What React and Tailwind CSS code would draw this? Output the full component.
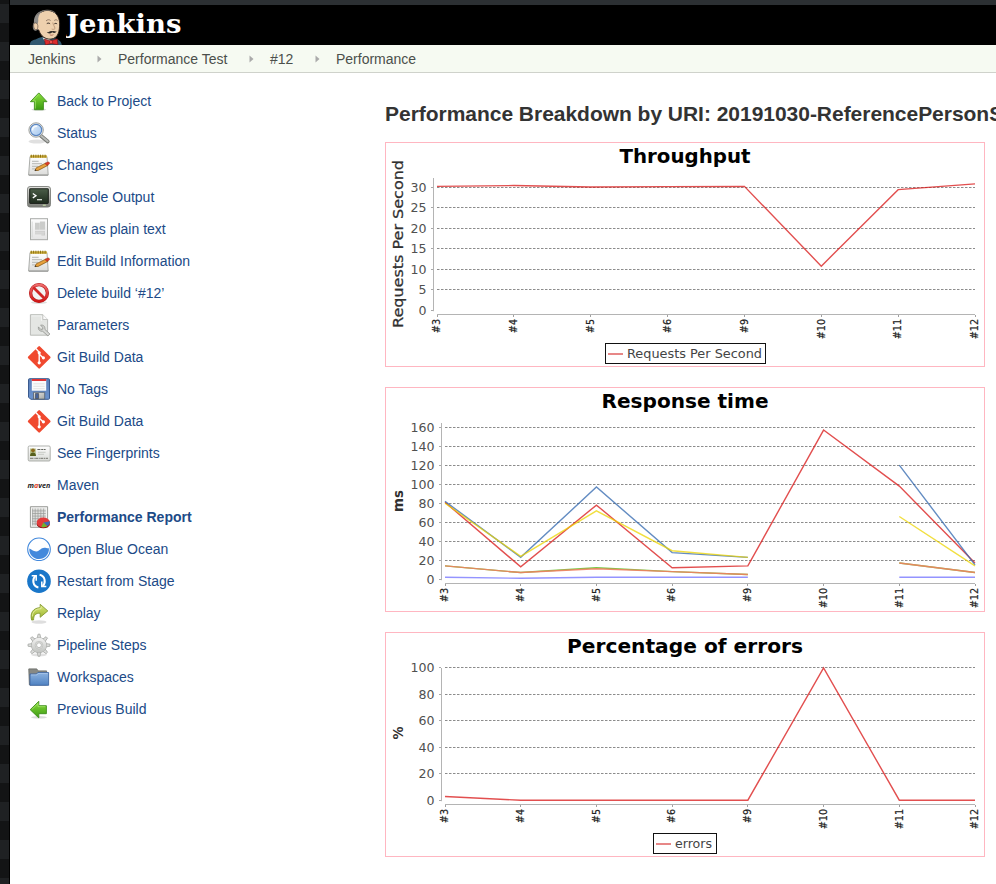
import React from 'react';

/* ---------- Sidebar icons, all on a 24x24 grid ---------- */

const Gradient = ({ id, from, to, diagonal }) => (
  <linearGradient id={id} x1="0" y1="0" x2={diagonal ? '1' : '0'} y2="1">
    <stop offset="0" stopColor={from} />
    <stop offset="1" stopColor={to} />
  </linearGradient>
);

const UpIcon = () => (
  <>
    <defs><Gradient id="up" from="#8be03c" to="#3a9a10" /></defs>
    <ellipse cx="11.8" cy="20.6" rx="7.5" ry="1.2" fill="#000" opacity=".15" />
    <path d="M11.8 3.9 20 12.700h-3.600v8H7.400v-8H3.400z" fill="url(#up)" stroke="#3f8f1c" strokeWidth=".9" strokeLinejoin="round" />
    <path d="M11.800 5.300 5.800 11.800h2.600v7.800" fill="none" stroke="#b5f07a" strokeWidth=".6" />
  </>
);

const SearchIcon = () => (
  <>
    <defs><Gradient id="lens" from="#e4f0fd" to="#a3c6ee" diagonal /></defs>
    <ellipse cx="10" cy="20.500" rx="8.500" ry="2" fill="#000" opacity=".12" />
    <path d="m13.800 14.700 6.900 5.800" stroke="#777975" strokeWidth="3.800" strokeLinecap="round" />
    <path d="m14 14.700 6.700 5.600" stroke="#b9bbb8" strokeWidth="2" strokeLinecap="round" />
    <circle cx="9.100" cy="9" r="7.200" fill="#f4f5f4" stroke="#91938f" strokeWidth=".9" />
    <circle cx="9.100" cy="9" r="5.600" fill="url(#lens)" stroke="#5b86c2" strokeWidth="1.200" />
    <path d="M5.400 9.400c.2-3 2-4.400 4.800-4.200" stroke="#fff" strokeWidth="1.600" fill="none" opacity=".8" />
  </>
);

const NotepadIcon = () => (
  <>
    <defs><Gradient id="paper" from="#ffffff" to="#dcdcda" /></defs>
    <path d="M3 3.600h17l1.200 18.400H1.600z" fill="url(#paper)" stroke="#a2a4a0" strokeWidth=".9" strokeLinejoin="round" />
    <path d="M1.800 22.200h19.300" stroke="#8d8f8b" strokeWidth=".9" />
    <path d="M3.200 2.300h16.700v2.500H3.200z" fill="#cfae3c" />
    <path d="M4.300 1.700v2.900M6.600 1.700v2.900M8.900 1.700v2.900M11.200 1.700v2.900M13.500 1.700v2.900M15.800 1.700v2.900M18.100 1.700v2.900" stroke="#8c7212" strokeWidth="1" />
    <path d="M5 8.300h6.600M5 10.700h10M5 13.300h6M5 15.900h3" stroke="#b5b7b3" strokeWidth="1" />
    <path d="m8 17.600 1.200-2.700 10-5 1.800 2.400-9.800 5.100z" fill="#e8a13c" stroke="#8b5a14" strokeWidth=".8" strokeLinejoin="round" />
    <path d="m18 10.500 2.600-1.400c1.600-.6 2.600 1.200 1.400 2.100L19.600 12.300z" fill="#df3c26" stroke="#a3281a" strokeWidth=".5" />
    <path d="m7.500 18 1-1.800 1.100 1.200z" fill="#333" />
  </>
);

const ConsoleIcon = () => (
  <>
    <defs><Gradient id="bezel" from="#e2e2de" to="#777973" /><Gradient id="screen" from="#4b5e49" to="#1d2a1c" /></defs>
    <rect x=".5" y="1.500" width="23" height="20.600" rx="2.600" fill="url(#bezel)" stroke="#7d7f7a" strokeWidth=".9" />
    <rect x="2.700" y="3.700" width="18.600" height="14.800" rx=".9" fill="url(#screen)" stroke="#1f241e" strokeWidth="1.100" />
    <path d="m5.800 8.500 3.200 2.200-3.200 2.200" fill="none" stroke="#fff" strokeWidth="1.300" />
    <path d="M10 14.700h5" stroke="#e6ebe4" strokeWidth="1.200" />
    <path d="M15.800 20.200h3" stroke="#d4f0ae" strokeWidth=".9" />
  </>
);

const DocumentIcon = () => (
  <>
    <defs><Gradient id="doc" from="#fdfdfd" to="#e4e4e4" /></defs>
    <rect x="3.500" y="1.700" width="17" height="21" fill="url(#doc)" stroke="#a9aba8" />
    <path d="M5.200 4.500v16" stroke="#d4d5d3" strokeWidth=".8" />
    <path d="M8 5.800h4.700v7H8zM12.900 4.500h5.200v8.300h-5.200zM8 13.800h10v4.600h-3.600v-1H8z" fill="#cbccca" />
    <path d="M8 15.200h9.500M8 17h9" stroke="#ededec" strokeWidth=".5" />
  </>
);

const DeleteIcon = () => (
  <>
    <defs><Gradient id="stop" from="#ee6b6b" to="#d01818" /></defs>
    <ellipse cx="12" cy="21.500" rx="8" ry="1.500" fill="#000" opacity=".13" />
    <circle cx="12" cy="12" r="8.400" fill="#f3f3f3" stroke="#b51a1a" strokeWidth="3.300" />
    <circle cx="12" cy="12" r="8.400" fill="none" stroke="url(#stop)" strokeWidth="2.300" />
    <path d="m6.200 6.200 11.600 11.600" stroke="#d22626" strokeWidth="2.800" />
  </>
);

const ParametersIcon = () => (
  <>
    <path d="M3.400 1.700h12.400l4.800 4.800v15.700H3.400z" fill="#e4e6e3" stroke="#b3b5b1" strokeWidth=".9" />
    <path d="M15.800 1.700v4.800h4.800" fill="#fafafa" stroke="#b9bab8" strokeWidth=".8" />
    <path d="M4.500 2.900h10v5" stroke="#f6f6f6" strokeWidth=".8" fill="none" />
    <path d="M11.400 13.900c-.5 2.600 1.200 4.500 4.300 4.400l5.200 4.600 2-1.900-5-4.600c.3-3-1.600-4.900-4.300-4.100l2.300 2.100-.2 1.800-2 .2z" fill="#d7d8d5" stroke="#969894" strokeWidth=".9" strokeLinejoin="round" />
  </>
);

const GitIcon = () => (
  <>
    <rect x="3.900" y="4.100" width="16.600" height="16.600" rx="1.100" transform="rotate(45 12.200 12.400)" fill="#f0492f" />
    <path d="M8.800 3.600 12.200 7.200v11M12.400 9.200l3.600 3.600" fill="none" stroke="#fff" strokeWidth="1.400" />
    <circle cx="12.200" cy="7.800" r="1.600" fill="#fff" />
    <circle cx="12.200" cy="17.800" r="1.600" fill="#fff" />
    <circle cx="16.400" cy="12.800" r="1.600" fill="#fff" />
  </>
);

const FloppyIcon = () => (
  <>
    <defs><Gradient id="floppy" from="#5b7fb8" to="#6c93cd" /><Gradient id="shutter" from="#e8e8e6" to="#a6a8a4" diagonal /></defs>
    <path d="M2.500 1.700h19q1 0 1 1v18.600q0 1-1 1H4l-2.500-2V2.700q0-1 1-1z" fill="url(#floppy)" stroke="#3a5a8e" />
    <path d="M4.800 2.100h14.400v11.600H4.800z" fill="#fbfbfb" />
    <path d="M4.800 2.100h14.400v1.800H4.800z" fill="#e01f1f" />
    <path d="M6.400 6.800h11.200M6.400 9.300h11.200M6.400 11.700h11.200" stroke="#dcdddb" strokeWidth=".8" />
    <path d="M6.500 15.300h11.200v6.800H6.500z" fill="url(#shutter)" stroke="#53606f" strokeWidth=".8" />
    <path d="M8.400 16.500h3.200v5H8.400z" fill="#46639a" stroke="#333" strokeWidth=".5" />
  </>
);

const CardIcon = () => (
  <>
    <defs><Gradient id="card" from="#ffffff" to="#d8dad6" /></defs>
    <rect x="1.200" y="5" width="22" height="15" rx="1.200" fill="url(#card)" stroke="#a6a8a4" strokeWidth=".9" />
    <path d="M3 7.500h5.800v7.600H3z" fill="#b7bf8a" />
    <circle cx="6" cy="9.300" r="1.900" fill="#8d6a1c" />
    <path d="M3 14.900c0-4.600 6-4.600 6 0z" fill="#57601d" />
    <path d="M10.400 8.500h3M14.200 8.500h1.800M16.600 8.500h2" stroke="#63655f" strokeWidth="1" />
    <path d="M11 11.300h7.600M11 13.300h6" stroke="#c4c6c1" strokeWidth=".9" />
    <path d="M3 17.300h18" stroke="#73756f" strokeWidth="1" strokeDasharray="3 .6 1 .6" />
  </>
);

const MavenIcon = () => (
  <text y="14.600" x=".6" fontFamily="'Open Sans', sans-serif" fontWeight="700" fontStyle="italic" fontSize="7.600" textLength="22.800" lengthAdjust="spacingAndGlyphs" fill="#1d1d1d">
    m<tspan fill="#e0452c">a</tspan>ven
  </text>
);

const ReportIcon = () => (
  <>
    <path d="M3.400 1.700h17.200v20.600H3.400z" fill="#f3f3f2" stroke="#9a9c98" />
    <path d="M5.200 3.500h13.600v17H5.200z" fill="#dfe0de" />
    <path d="M5.200 5.900h13.600M5.200 8.500h13.600M5.200 11.100h13.600M5.200 13.700h13.600M5.200 16.300h8M5.200 18.900h6M5.600 3.500v17M8.200 3.500v17M11 3.500v13M13.800 3.500v10M16.600 3.500v10" stroke="#999b98" strokeWidth=".7" />
    <ellipse cx="16.300" cy="18.900" rx="6.600" ry="4.400" fill="#8d1010" />
    <ellipse cx="16.300" cy="17.500" rx="6.600" ry="5" fill="#e23b3b" />
    <path d="M16.300 17.500 22.900 16.300c.2 2-.5 3.600-2.600 4.600z" fill="#3f6db3" />
    <path d="m16.300 17.500 4 3.800c-1.600.9-4 1.300-6 .8z" fill="#6fb52c" />
  </>
);

const OceanIcon = () => (
  <>
    <circle cx="12" cy="12.300" r="11.300" fill="#fff" stroke="#4389dc" strokeWidth="1.100" />
    <path d="M2.300 11.500c2.400.8 3.800 3 7 2.900 3.600-.2 4.600-3.600 8-3.600 1.700 0 2.900.7 4.600.5.600 6-4.300 10.800-9.900 10.800S1.800 17.500 2.300 11.500z" fill="#4389dc" />
  </>
);

const RestartIcon = () => (
  <>
    <circle cx="12" cy="12.200" r="11.800" fill="#1976c9" />
    <path d="M8.300 6.900C5 10.500 5.600 17.200 11.400 18.400M15.700 17.300c3.300-3.600 2.700-10.300-3.100-11.500" fill="none" stroke="#fff" strokeWidth="2" />
    <path d="M4.700 6.700h4.500v5M19.300 17.600h-4.500v-5" fill="none" stroke="#fff" strokeWidth="1.500" />
  </>
);

const ReplayIcon = () => (
  <>
    <defs><Gradient id="replay" from="#dbe87c" to="#93ae24" /></defs>
    <ellipse cx="12" cy="21" rx="7.500" ry="1.800" fill="#000" opacity=".13" />
    <path d="M4.600 19.100C2.800 12.100 6 6.900 13.200 6.700V3.300l7.600 6.600-7.600 6.400v-4c-4-.4-6.800 1.600-6.600 6.600z" fill="url(#replay)" stroke="#849a31" strokeWidth=".9" strokeLinejoin="round" />
    <path d="M5.400 15.500c0-4.600 3.200-7.800 8.600-7.800V5.500" fill="none" stroke="#f0f6b8" strokeWidth=".7" />
  </>
);

const GearIcon = () => (
  <>
    <defs><Gradient id="gear" from="#f1f1f0" to="#c2c4c1" /></defs>
    <ellipse cx="12" cy="21.800" rx="8" ry="1.600" fill="#000" opacity=".12" />
    <g fill="#dcdddb" stroke="#a6a8a5" strokeWidth=".8">
      {[0, 45, 90, 135, 180, 225, 270, 315].map((a) => (
        <path key={a} d="M10.200 6 11 1.200h2l.8 4.800z" transform={`rotate(${a} 12 12.200)`} />
      ))}
    </g>
    <circle cx="12" cy="12.200" r="7.600" fill="url(#gear)" stroke="#adafac" strokeWidth=".8" />
    <circle cx="12" cy="12.200" r="7.100" fill="url(#gear)" />
    <circle cx="12" cy="12.200" r="3.900" fill="#dfe0de" stroke="#bbbdba" strokeWidth=".7" />
    <circle cx="12" cy="12.200" r="2.400" fill="#fff" stroke="#a6a8a5" strokeWidth=".7" />
  </>
);

const FolderIcon = () => (
  <>
    <defs><Gradient id="folder" from="#8db3e0" to="#4f82c2" /></defs>
    <path d="M1.800 3.900h8l1.200 2h8.600v14H2.400z" fill="#878985" stroke="#6c6e6a" strokeWidth=".9" />
    <path d="M3 9h6.400l1.400-1.500h10.800v12.800H3z" fill="url(#folder)" stroke="#3f68a3" strokeWidth=".9" />
    <path d="M4 9.900h6l1.300-1.500h9.500" fill="none" stroke="#b9d2ef" strokeWidth=".6" />
  </>
);

const BackIcon = () => (
  <>
    <defs><Gradient id="back" from="#8bdc3e" to="#3b9a12" /></defs>
    <ellipse cx="12" cy="20.300" rx="8" ry="1.300" fill="#000" opacity=".14" />
    <path d="m3.200 12.700 8.600-8.400v4.400h7.600v8h-7.600v4.200z" fill="url(#back)" stroke="#3f8f1c" strokeWidth=".9" strokeLinejoin="round" />
    <path d="m4.800 12.500 6.200-6v3.200h7.400" fill="none" stroke="#b5f07a" strokeWidth=".6" />
  </>
);

const tasks = [
  ['Back to Project', UpIcon],
  ['Status', SearchIcon],
  ['Changes', NotepadIcon],
  ['Console Output', ConsoleIcon],
  ['View as plain text', DocumentIcon],
  ['Edit Build Information', NotepadIcon],
  ['Delete build ‘#12’', DeleteIcon],
  ['Parameters', ParametersIcon],
  ['Git Build Data', GitIcon],
  ['No Tags', FloppyIcon],
  ['Git Build Data', GitIcon],
  ['See Fingerprints', CardIcon],
  ['Maven', MavenIcon],
  ['Performance Report', ReportIcon],
  ['Open Blue Ocean', OceanIcon],
  ['Restart from Stage', RestartIcon],
  ['Replay', ReplayIcon],
  ['Pipeline Steps', GearIcon],
  ['Workspaces', FolderIcon],
  ['Previous Build', BackIcon],
];

/* ---------- Charts ---------- */

const builds = ['#3', '#4', '#5', '#6', '#9', '#10', '#11', '#12'];
const chartFont = "'DejaVu Sans', sans-serif";

function Chart({ title, titleWidth, unit, unitWidth, unitCenter, axisX, axisTop, axisY, firstX, ticks, zeroY, scale, series, legend }) {
  const right = 590;
  const step = (right - firstX) / (builds.length - 1);
  const x = (i) => firstX + step * i;
  const y = (v) => zeroY - v * scale;
  return (
    <div className="h-[225px] w-[600px] border border-[#ffb6c1] bg-white">
      <svg className="-m-px block h-[225px] w-[600px]" viewBox="0 0 600 225" fontFamily={chartFont}>
        <text x="300" y="21" textAnchor="middle" fontSize="20" fontWeight="700" textLength={titleWidth} lengthAdjust="spacingAndGlyphs">{title}</text>
        <text transform={`translate(18 ${unitCenter}) rotate(-90)`} textAnchor="middle" fontSize="14" fontWeight={unit.bold ? 700 : 400} textLength={unitWidth} lengthAdjust="spacingAndGlyphs" fill="#303030" stroke={unit.bold ? 'none' : '#303030'} strokeWidth=".25">{unit.text}</text>
        <path d={`M${axisX + 0.5} ${axisTop}V${zeroY + 1}M${firstX} ${axisY + 0.5}H${right}`} stroke="#b4b4b4" fill="none" />
        {ticks.map((t) => {
          const py = Math.floor(y(t)) + 0.5;
          return (
            <g key={t}>
              {t > 0 && <path d={`M${firstX} ${py}H${right}`} stroke="#8c8c8c" strokeDasharray="2.5 1.5" />}
              <path d={`M${axisX - 2} ${py}h2`} stroke="#a8a8a8" />
              <text x={axisX - 6.5} y={py + 4.2} textAnchor="end" fontSize="12" textLength={String(t).length * 8} lengthAdjust="spacingAndGlyphs" fill="#505050">{t}</text>
            </g>
          );
        })}
        {builds.map((b, i) => (
          <g key={b}>
            <path d={`M${Math.floor(x(i)) + 0.5} ${axisY + 1}v2`} stroke="#a0a0a0" />
            <text transform={`translate(${x(i) + 3.3} ${axisY + 5}) rotate(-90)`} textAnchor="end" fontSize="9.6" fill="#222" stroke="#222" strokeWidth=".2">{b}</text>
          </g>
        ))}
        {series.map((s, k) => {
          let pen = 'M';
          let d = '';
          s.values.forEach((v, i) => {
            if (v === null) { pen = 'M'; return; }
            d += `${pen}${x(i).toFixed(2)} ${y(v).toFixed(2)}`;
            pen = 'L';
          });
          return <path key={k} d={d} fill="none" stroke={s.color} strokeWidth="1.4" strokeOpacity={s.opacity ?? 0.75} />;
        })}
        {legend && (
          <g>
            <rect x={legend.x + 0.5} y="201.5" width={legend.width - 1} height="20" fill="#fff" stroke="#111" />
            <path d={`M${legend.x + 3} 212h15`} stroke="#e26a6a" strokeWidth="1.6" />
            <text x={legend.x + 22} y="216" fontSize="12" textLength={legend.textWidth} lengthAdjust="spacingAndGlyphs" fill="#444">{legend.label}</text>
          </g>
        )}
      </svg>
    </div>
  );
}

/* ---------- Header ---------- */

function Butler() {
  return (
    <svg className="h-[36px] w-[34px]" viewBox="0 0 34 36">
      <path d="M.8 36c.2-3 1.800-5 5.700-5.500 2-1 4-2 6.500-2.500l12 1c4 1 7.300 3 7.800 7z" fill="#31586f" />
      <path d="M13.500 28.500 21 30.500l1.500 2L17 34z" fill="#f1efe8" />
      <path d="M7 13C7 6 11.500 1.600 18.200 1.400c7.800 0 12.300 5.600 12.400 12.800.2 8-1.600 15.200-8.600 15.900-6 .4-10.300-3.200-12.300-9.200-1.800.3-4.600-3.800-2.700-7.900z" fill="#eed0ae" stroke="#2e211b" strokeWidth=".9" />
      <path d="M15.500 1.300C9 2 4.600 6.500 4.900 13.400c-1.600 2.600-1.400 6.800.7 8 1.200.6 2.600.1 3.200-.9-1.400-1.600-1.300-4.200-.2-5.800.8-1.300.7-3.200.6-5.200.4-3.600 2.400-6.600 6.300-8.200z" fill="#8f8d8a" />
      <path d="M8 6.200c2-3 5.600-5 10-5 3.600 0 6.600 1 8.600 3" fill="none" stroke="#77716c" strokeWidth="1" />
      <path d="M4.800 14.700c1.500-1.600 3.600-.6 4 1.800.3 2.300-.4 3.800-1.700 4.300-1.800.2-3-3.500-2.300-6.100z" fill="#eed0ae" stroke="#57453a" strokeWidth=".6" />
      <path d="M17 12c1.500-1.600 3.200-1.600 4.600-.5M25.300 11.500c1.100-1 2.400-1 3.300.2" fill="none" stroke="#70594b" strokeWidth=".7" />
      <path d="M17.800 14.600c1.200-.7 2.400-.6 3.300.2M25.400 14.800c.8-.6 2-.5 2.700.1" fill="none" stroke="#2b211d" strokeWidth="1" />
      <path d="M23.800 13.500c.2 2 2 4.300 2.200 6-.6 1-2.300 1-3.300.5" fill="none" stroke="#a98265" strokeWidth=".7" />
      <path d="M17.800 23.300c1.700.4 3.400-2.100 5.300-1.100 2-1 3 .7 4.400.1-.8 2.100-3 1.800-4.200 1-1.700 1.600-4.600 1.500-5.500 0z" fill="#2f2a27" />
      <path d="M20.800 25.800c1.300.6 2.600.5 3.600-.2" fill="none" stroke="#9c4e3f" strokeWidth=".7" />
      <path d="m15.400 30 6 2 6.800-2.200.8 6-6.800-1.300-5.800 1.500z" fill="#dd2c2d" stroke="#6d1012" strokeWidth=".6" />
      <circle cx="22" cy="33" r="1.700" fill="#f0504c" stroke="#7d1416" strokeWidth=".5" />
    </svg>
  );
}

const Caret = () => (
  <svg className="h-[8px] w-[5px]" viewBox="0 0 5 8"><path d="M.5.5 4.5 4 .5 7.500z" fill="#aaa" /></svg>
);

const crumbs = [['Jenkins', 'w-[48px]'], ['Performance Test', 'w-[110px]'], ['#12', 'w-[24px]'], ['Performance', 'w-[80px]']];

const palette = { red: '#d81414', blue: '#2f66ad', yellow: '#ecd400', green: '#4fb50a', orange: '#f08060', violet: '#7070ff' };

export default function App() {
  return (
    <div className="flex h-[884px] w-[996px] overflow-hidden bg-white font-['Liberation_Sans',Arial,sans-serif]">
      <div className="flex w-[10px] shrink-0 flex-col overflow-hidden border-r border-black bg-[#131415]">
        <div className="h-1 shrink-0" />
        {Array.from({ length: 24 }, (_, i) => (
          <div key={i} className="h-[38px] shrink-0 pb-[19px]"><div className="h-[19px] bg-[#1f2123]" /></div>
        ))}
      </div>
      <div className="flex w-[986px] shrink-0 flex-col">
        <div className="h-[5px] bg-[#2c3033]" />
        <header className="flex h-10 items-start bg-black pl-[19px] pt-[4px]">
          <Butler />
          <svg className="ml-[3px] h-[36px] w-[130px]" viewBox="0 0 130 36">
            <text x="0" y="24" fontFamily="'DejaVu Serif', serif" fontWeight="700" fontSize="26.500" textLength="115.500" lengthAdjust="spacingAndGlyphs" fill="#fff">Jenkins</text>
          </svg>
        </header>
        <nav className="flex h-[28px] items-center border-b border-[#cfd2cb] bg-[#f6faf2] pl-[18px] text-sm text-[#4b4f4b]">
          {crumbs.map(([label, width], i) => (
            <React.Fragment key={label}>
              {i > 0 && <span className="flex w-[42px] justify-center pl-[5px]"><Caret /></span>}
              <span className={`${width} whitespace-nowrap`}>{label}</span>
            </React.Fragment>
          ))}
        </nav>
        <div className="flex">
          <aside className="w-[375px] shrink-0 pl-[17px] pt-[12px]">
            {tasks.map(([label, Icon], i) => (
              <a key={i} className={`flex h-8 items-center gap-[6px] whitespace-nowrap text-sm text-[#204a87] ${label === 'Performance Report' ? 'font-bold' : ''}`}>
                <svg className="h-6 w-6" viewBox="0 0 24 24"><Icon /></svg>
                <span>{label}</span>
              </a>
            ))}
          </aside>
          <main className="flex flex-col gap-[20px] pt-[27px]">
            <h1 className="mb-[-7px] h-[29px] w-[611px] overflow-hidden whitespace-nowrap text-[21px] font-bold leading-[27px] tracking-[-0.03px] text-[#333]">
              Performance Breakdown by URI: 20191030-ReferencePersonS
            </h1>
            <Chart
              title="Throughput" titleWidth={131}
              unit={{ text: 'Requests Per Second' }} unitWidth={168} unitCenter={102}
              axisX={48} axisTop={36} axisY={172} firstX={52} zeroY={168.2} scale={4.1}
              ticks={[0, 5, 10, 15, 20, 25, 30]}
              series={[{ color: palette.red, values: [30.2, 30.4, 30.05, 30.15, 30.2, 10.75, 29.4, 30.8] }]}
              legend={{ x: 220, width: 161, label: 'Requests Per Second', textWidth: 135 }}
            />
            <Chart
              title="Response time" titleWidth={167}
              unit={{ text: 'ms', bold: true }} unitWidth={22} unitCenter={114}
              axisX={56} axisTop={36} axisY={196} firstX={60} zeroY={192.2} scale={0.95}
              ticks={[0, 20, 40, 60, 80, 100, 120, 140, 160]}
              series={[
                { color: palette.red, values: [81, 13, 78, 12, 14, 157, 98, 17] },
                { color: palette.blue, values: [82, 23, 97, 28, 23, null, 120, 15] },
                { color: palette.yellow, values: [80, 24, 72, 30, 23, null, 66, 14] },
                { color: palette.green, values: [14, 7, 12, 8, 5, null, 17, 7] },
                { color: palette.orange, values: [14, 7, 11, 8, 5, null, 17, 7], opacity: 0.9 },
                { color: palette.violet, values: [2, 1, 2, 2, 2, null, 2, 2] },
              ]}
            />
            <Chart
              title="Percentage of errors" titleWidth={236}
              unit={{ text: '%', bold: true }} unitWidth={13} unitCenter={101}
              axisX={56} axisTop={36} axisY={172} firstX={60} zeroY={168.2} scale={1.322}
              ticks={[0, 20, 40, 60, 80, 100]}
              series={[{ color: palette.red, values: [2.8, 0, 0, 0, 0, 100, 0, 0] }]}
              legend={{ x: 268, width: 64, label: 'errors', textWidth: 37 }}
            />
          </main>
        </div>
      </div>
    </div>
  );
}
